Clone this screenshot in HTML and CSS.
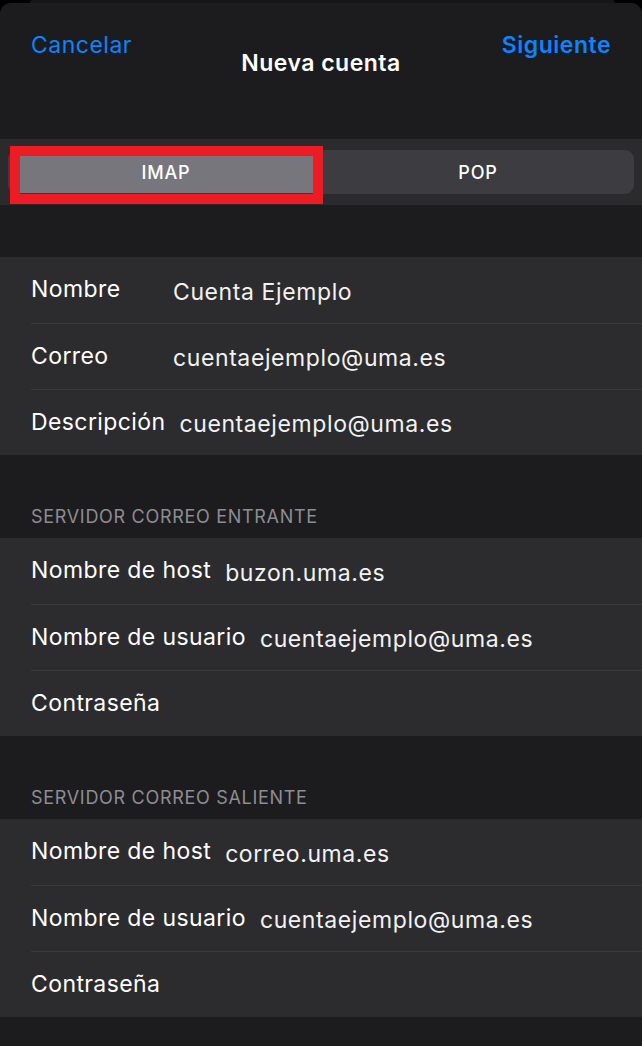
FILE: index.html
```html
<!DOCTYPE html>
<html lang="es">
<head>
    <meta charset="UTF-8">
    <meta name="viewport" content="width=device-width, initial-scale=1.0">
    <title>Nueva cuenta</title>
    <link rel="stylesheet" href="styles.css">
</head>
<body>

    <div class="sheet-behind"></div>

    <div class="sheet">
        <div class="nav">
            <span class="nav-btn">Cancelar</span>
            <span class="nav-title">Nueva cuenta</span>
            <span class="nav-btn nav-next">Siguiente</span>
        </div>

        <div class="segment-band">
            <div class="segment-track">
                <div class="segment selected">IMAP</div>
                <div class="segment">POP</div>
                <div class="highlight-box"></div>
            </div>
        </div>

        <div class="group first-group">
            <div class="row"><span class="label">Nombre</span><span class="value">Cuenta Ejemplo</span></div>
            <div class="row"><span class="label">Correo</span><span class="value">cuentaejemplo@uma.es</span></div>
            <div class="row"><span class="label">Descripción</span><span class="value">cuentaejemplo@uma.es</span></div>
        </div>

        <div class="section-title">SERVIDOR CORREO ENTRANTE</div>
        <div class="group">
            <div class="row"><span class="label">Nombre de host</span><span class="value">buzon.uma.es</span></div>
            <div class="row"><span class="label">Nombre de usuario</span><span class="value">cuentaejemplo@uma.es</span></div>
            <div class="row"><span class="label">Contraseña</span><span class="value"></span></div>
        </div>

        <div class="section-title">SERVIDOR CORREO SALIENTE</div>
        <div class="group">
            <div class="row"><span class="label">Nombre de host</span><span class="value">correo.uma.es</span></div>
            <div class="row"><span class="label">Nombre de usuario</span><span class="value">cuentaejemplo@uma.es</span></div>
            <div class="row"><span class="label">Contraseña</span><span class="value"></span></div>
        </div>
    </div>

</body>
</html>
```

FILE: styles.css
```css
body {
    margin: 0;
    padding: 0;
    background-color: #000;
    color: #fff;
    font-family: Inter, "Noto Sans", sans-serif;
    height: 1046px;
    overflow: hidden;
}

/* карточка позади листа */
.sheet-behind {
    height: 3px;
    margin: 0 27px 0 30px;
    background-color: #161617;
    border-radius: 10px 10px 0 0;
}

.sheet {
    background-color: #1c1c1e;
    border-radius: 11px 11px 0 0;
    height: 1043px;
}

.nav {
    height: 136px;
    display: grid;
    grid-template-columns: 1fr auto 1fr;
    align-items: start;
    padding: 0 31px;
}

.nav-btn {
    color: #0a84ff;
    font-size: 23px;
    letter-spacing: 0.5px;
    line-height: 28px;
    padding-top: 28px;
}

.nav-next {
    text-align: right;
    font-weight: 600;
    letter-spacing: 0.5px;
}

.nav-title {
    font-size: 23px;
    font-weight: 600;
    letter-spacing: 0.5px;
    line-height: 28px;
    margin-top: 46px;
}

/* сегментированный переключатель */
.segment-band {
    background-color: #2b2b2d;
    height: 66px;
    padding: 11px 8px;
    box-sizing: border-box;
}

.segment-track {
    position: relative;
    display: flex;
    height: 44px;
    background-color: #3c3c41;
    border-radius: 9px;
}

.segment {
    flex: 1;
    display: flex;
    align-items: center;
    justify-content: center;
    font-size: 18px;
    font-weight: 500;
    letter-spacing: 0.8px;
    color: #fff;
}

.segment.selected {
    background-color: #77767c;
    margin: 2px 0 1px 2px;
    border-radius: 7px;
    box-shadow: 0 2px 0 #3a3a3e;
}

.highlight-box {
    position: absolute;
    left: 2px;
    top: -4px;
    width: 293px;
    height: 38px;
    border: 10px solid #ed1c24;
}

/* группы */
.group {
    background-color: #2c2c2e;
}

.first-group {
    margin-top: 52px;
}

.row {
    display: flex;
    align-items: center;
    height: 66px;
    margin-left: 31px;
    border-top: 1px solid #3a3a3c;
    box-sizing: border-box;
    font-size: 23px;
    letter-spacing: 0.6px;
}

.row:first-child {
    border-top: none;
}

.label {
    min-width: 128px;
    margin-right: 14px;
    margin-top: -2px;
    letter-spacing: 0.4px;
}

.value {
    color: #f2f2f2;
    margin-top: 3px;
}

.section-title {
    color: #8d8d93;
    font-size: 18px;
    letter-spacing: 0.7px;
    line-height: 20px;
    margin-top: 52px;
    padding: 0 31px 11px;
}
```
